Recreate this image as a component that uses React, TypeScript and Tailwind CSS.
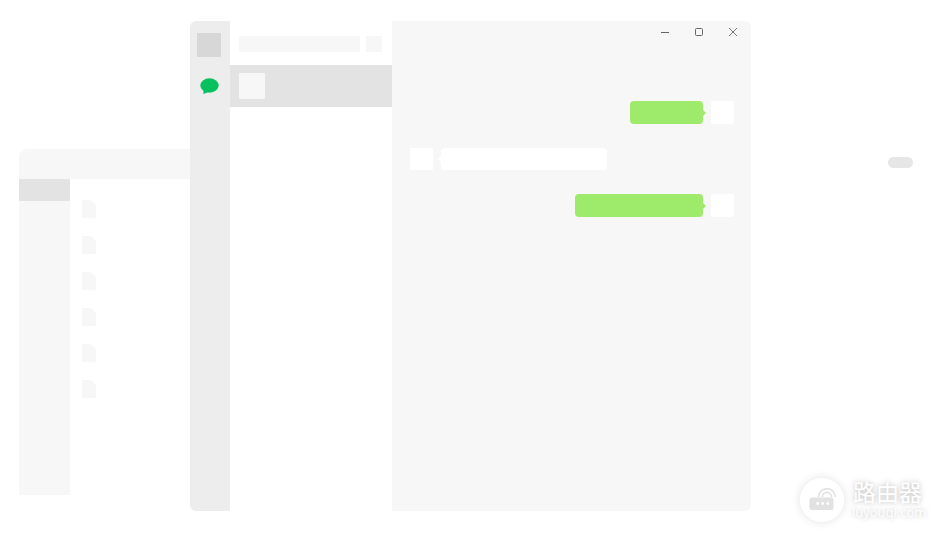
const FONT = { fontFamily: '"Noto Sans CJK SC", "Liberation Sans", sans-serif' };

function FileIcon() {
  return (
    <svg width="14" height="18" viewBox="0 0 14 18" className="block">
      <path d="M1 0H9L14 5V17a1 1 0 0 1-1 1H1a1 1 0 0 1-1-1V1a1 1 0 0 1 1-1Z" fill="#f7f7f7" />
    </svg>
  );
}

function ChatIcon() {
  return (
    <svg width="19" height="17" viewBox="0 0 19 17" className="block">
      <ellipse cx="9.5" cy="7.5" rx="9.2" ry="7.2" fill="#07c160" />
      <path d="M3.5 12 L3.4 16 L8.5 14 Z" fill="#07c160" />
    </svg>
  );
}

function Bubble({ width }: { width: string }) {
  return (
    <div className="flex justify-end items-center gap-2">
      <div className={`relative h-[23px] rounded-[4px] bg-[#9eea6a] ${width}`}>
        <div className="absolute right-[-3px] top-[9px] w-0 h-0 border-y-[3px] border-y-transparent border-l-[3px] border-l-[#9eea6a]" />
      </div>
      <div className="w-[23px] h-[23px] rounded-[2px] bg-white" />
    </div>
  );
}

function RouterLogo() {
  return (
    <svg width="44" height="44" viewBox="0 0 44 44" className="block">
      <circle cx="22" cy="22" r="22" fill="#ffffff" />
      <g fill="none" stroke="#e2e2e2" strokeWidth="1.7">
        <path d="M18.6 19 a8.4 8.4 0 0 1 16.8 0" />
        <path d="M22.4 19 a4.6 4.6 0 0 1 9.2 0" />
      </g>
      <rect x="9.5" y="19.5" width="24" height="12.5" rx="2" fill="#e2e2e2" />
      <circle cx="17.7" cy="25.5" r="1.4" fill="#ffffff" />
      <circle cx="22.7" cy="25.5" r="1.4" fill="#ffffff" />
      <circle cx="27.7" cy="25.5" r="1.4" fill="#ffffff" />
    </svg>
  );
}

export default function App() {
  return (
    <div className="relative w-[940px] h-[540px] bg-white overflow-hidden" style={FONT}>
      {/* Back window: file manager */}
      <div className="absolute left-[19px] top-[149px] w-[171px] h-[346px] flex flex-col">
        <div className="h-[30px] shrink-0 bg-[#f7f7f7] rounded-tl-[8px]" />
        <div className="flex flex-1">
          <div className="w-[51px] bg-[#f7f7f7]">
            <div className="h-[22px] bg-[#e3e3e3]" />
          </div>
          <div className="flex-1 bg-white pl-3 pt-[21px] flex flex-col gap-[18px]">
            <FileIcon />
            <FileIcon />
            <FileIcon />
            <FileIcon />
            <FileIcon />
            <FileIcon />
          </div>
        </div>
      </div>

      {/* Front window: chat */}
      <div className="absolute left-[190px] top-[21px] w-[561px] h-[490px] flex rounded-[6px] overflow-hidden">
        <div className="w-10 shrink-0 bg-[#ededed] flex flex-col pl-[7px] pt-3">
          <div className="w-6 h-6 rounded-[1px] bg-[#d7d7d7]" />
          <div className="mt-[21px] pl-[3px]">
            <ChatIcon />
          </div>
        </div>

        <div className="w-[162px] shrink-0 bg-white flex flex-col">
          <div className="h-11 shrink-0 flex px-[9px] pt-[15px] gap-[6px]">
            <div className="w-[121px] h-4 bg-[#f7f7f7]" />
            <div className="w-4 h-4 bg-[#f7f7f7]" />
          </div>
          <div className="h-[42px] bg-[#e3e3e3] flex items-center pl-[9px]">
            <div className="w-[26px] h-[26px] rounded-[1px] bg-[#f7f7f7]" />
          </div>
        </div>

        <div className="flex-1 bg-[#f7f7f7] flex flex-col">
          <div className="h-[22px] shrink-0 flex justify-end items-center">
            <div className="flex items-center gap-[24px] pr-[13px]">
              <svg width="10" height="10" viewBox="0 0 10 10" className="block">
                <path d="M1 5.5H9" stroke="#666" strokeWidth="1" fill="none" />
              </svg>
              <svg width="10" height="10" viewBox="0 0 10 10" className="block">
                <rect x="1.5" y="1.5" width="7" height="7" rx="1" stroke="#666" strokeWidth="1" fill="none" />
              </svg>
              <svg width="10" height="10" viewBox="0 0 10 10" className="block">
                <path d="M1 1L9 9M9 1L1 9" stroke="#666" strokeWidth="0.9" fill="none" />
              </svg>
            </div>
          </div>
          <div className="flex flex-col pl-[18px] pr-[17px] pt-[58px]">
            <Bubble width="w-[73px]" />
            <div className="flex items-center gap-2 mt-[24px] mb-[24px]">
              <div className="w-[23px] h-[22px] rounded-[1px] bg-white" />
              <div className="relative w-[166px] h-[22px] rounded-[4px] bg-white">
                <div className="absolute left-[-3px] top-[8px] w-0 h-0 border-y-[3px] border-y-transparent border-r-[3px] border-r-white" />
              </div>
            </div>
            <Bubble width="w-[128px]" />
          </div>
        </div>
      </div>

      {/* Small pill */}
      <div className="absolute left-[888px] top-[157px] w-[25px] h-[11px] rounded-full bg-[#e6e6e6]" />

      {/* Watermark */}
      <div className="absolute left-[800px] top-[478px] flex items-start gap-[9px]">
        <div className="rounded-full shadow-[0_0_10px_rgba(0,0,0,0.12)]">
          <RouterLogo />
        </div>
        <div className="flex flex-col items-start text-white font-normal [text-shadow:0_0_4px_rgba(0,0,0,0.2),0_0_10px_rgba(0,0,0,0.12)]">
          <span className="text-[23px] leading-[26px]">路由器</span>
          <span className="text-[13px] leading-[16px] ml-[-1px] font-['Open_Sans',sans-serif]">luyouqi.com</span>
        </div>
      </div>
    </div>
  );
}
